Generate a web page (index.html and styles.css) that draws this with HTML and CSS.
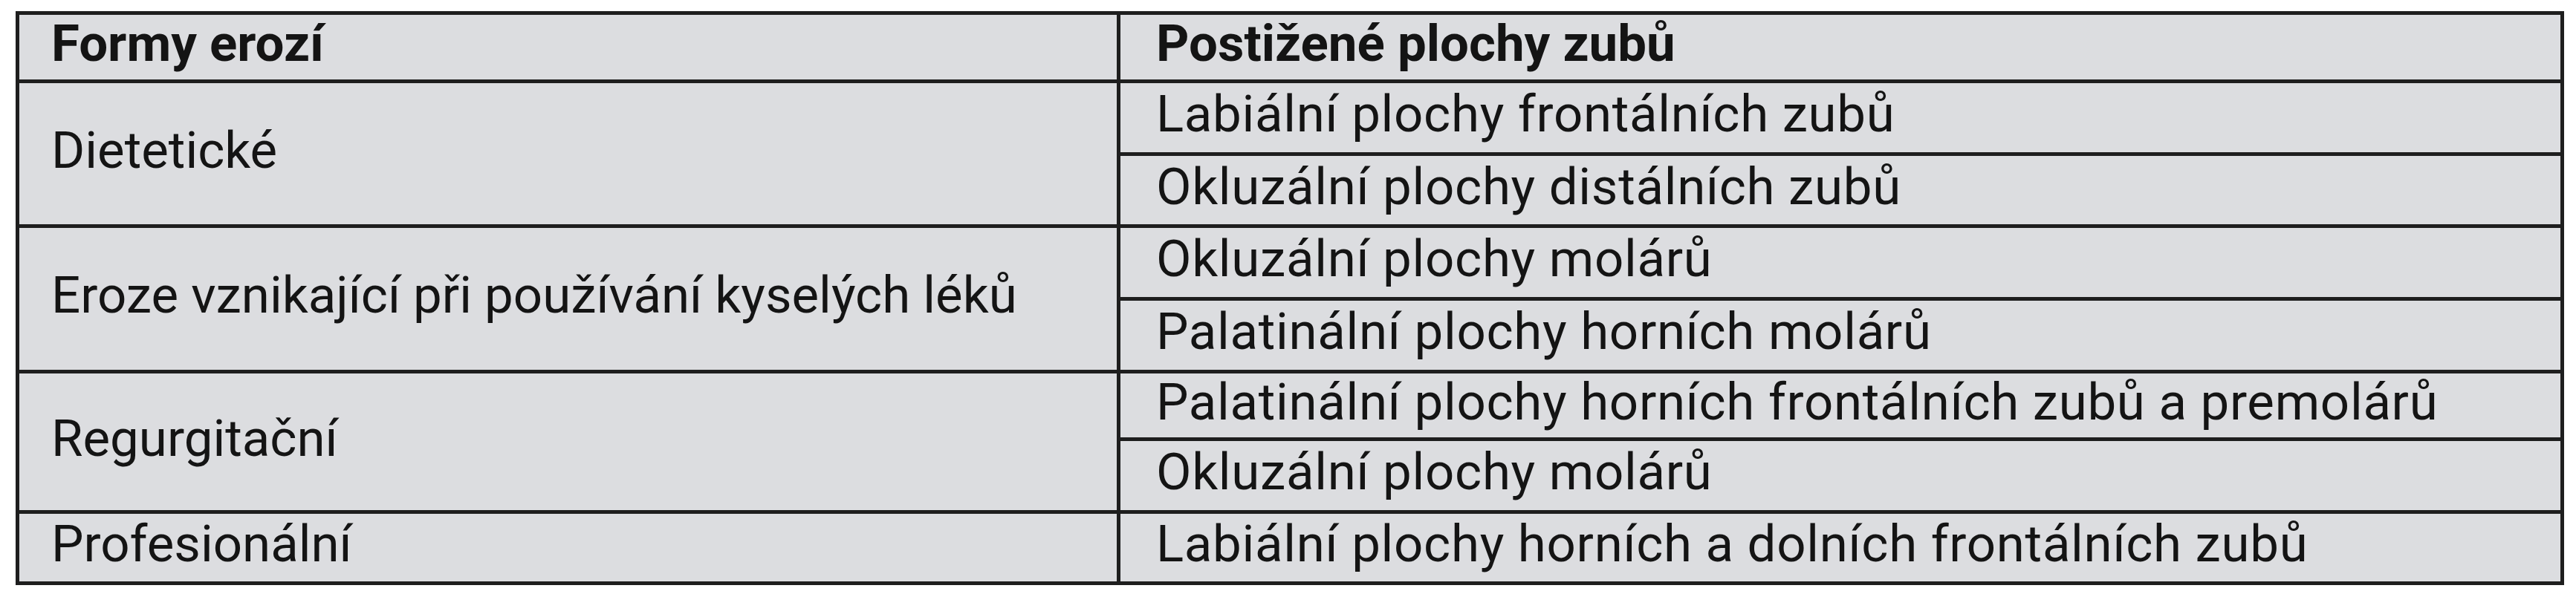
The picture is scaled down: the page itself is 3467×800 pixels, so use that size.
FILE: index.html
```html
<!DOCTYPE html>
<html lang="cs">
<head>
<meta charset="utf-8">
<title>Formy erozí</title>
<link rel="stylesheet" href="styles.css">
</head>
<body>
<table class="erosion">
  <colgroup>
    <col class="col-form">
    <col class="col-area">
  </colgroup>
  <thead>
    <tr class="row-head">
      <th class="cell cell-form">Formy erozí</th>
      <th class="cell cell-area">Postižené plochy zubů</th>
    </tr>
  </thead>
  <tbody>
    <tr class="row-a">
      <td class="cell cell-form" rowspan="2">Dietetické</td>
      <td class="cell cell-area">Labiální plochy frontálních zubů</td>
    </tr>
    <tr class="row-b">
      <td class="cell cell-area">Okluzální plochy distálních zubů</td>
    </tr>
    <tr class="row-a">
      <td class="cell cell-form" rowspan="2">Eroze vznikající při používání kyselých léků</td>
      <td class="cell cell-area">Okluzální plochy molárů</td>
    </tr>
    <tr class="row-a">
      <td class="cell cell-area">Palatinální plochy horních molárů</td>
    </tr>
    <tr class="row-c">
      <td class="cell cell-form" rowspan="2">Regurgitační</td>
      <td class="cell cell-area">Palatinální plochy horních frontálních zubů a premolárů</td>
    </tr>
    <tr class="row-a">
      <td class="cell cell-area">Okluzální plochy molárů</td>
    </tr>
    <tr class="row-d">
      <td class="cell cell-form">Profesionální</td>
      <td class="cell cell-area">Labiální plochy horních a dolních frontálních zubů</td>
    </tr>
  </tbody>
</table>
</body>
</html>
```
FILE: styles.css
```css
html, body {
  margin: 0;
  padding: 0;
  background: #ffffff;
}

body {
  padding: 15px 0 0 21px;
  font-family: Roboto, "Liberation Sans", sans-serif;
  color: #141414;
}

.erosion {
  border-collapse: separate;
  border-spacing: 0;
  table-layout: fixed;
  width: 3430px;
  border-top: 5px solid #1e1e1e;
  border-left: 5px solid #1e1e1e;
  background: #dcdde0;
}

.col-form { width: 1482px; }
.col-area { width: 1943px; }

.cell {
  box-sizing: border-box;
  border-right: 5px solid #1e1e1e;
  border-bottom: 5px solid #1e1e1e;
  padding: 0 0 10px 0;
  font-size: 69px;
  line-height: 1;
  font-weight: 400;
  text-align: left;
  vertical-align: middle;
  white-space: nowrap;
}

th.cell {
  font-weight: 700;
}

.cell-form { padding-left: 43px; }
.cell-area { padding-left: 48px; }

td.cell-area { letter-spacing: 0.7px; }

.row-head { height: 92px; }
.row-a { height: 98px; }
.row-b { height: 97px; }
.row-c { height: 91px; }
.row-d { height: 96px; }
```
